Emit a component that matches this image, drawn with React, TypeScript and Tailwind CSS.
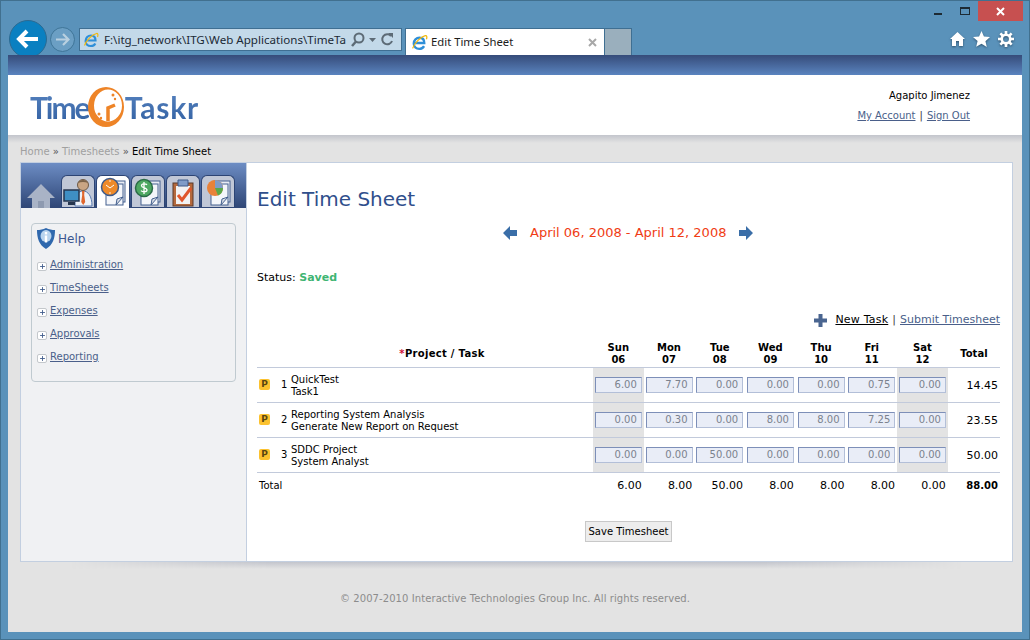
import { Plus } from 'lucide-react';

const days = [
    ['Sun', '06'],
    ['Mon', '07'],
    ['Tue', '08'],
    ['Wed', '09'],
    ['Thu', '10'],
    ['Fri', '11'],
    ['Sat', '12'],
];

const rows = [
    { n: 1, project: 'QuickTest', task: 'Task1', hours: ['6.00', '7.70', '0.00', '0.00', '0.00', '0.75', '0.00'], total: '14.45' },
    { n: 2, project: 'Reporting System Analysis', task: 'Generate New Report on Request', hours: ['0.00', '0.30', '0.00', '8.00', '8.00', '7.25', '0.00'], total: '23.55' },
    { n: 3, project: 'SDDC Project', task: 'System Analyst', hours: ['0.00', '0.00', '50.00', '0.00', '0.00', '0.00', '0.00'], total: '50.00' },
];

const totals = ['6.00', '8.00', '50.00', '8.00', '8.00', '8.00', '0.00'];
const helpLinks = ['Administration', 'TimeSheets', 'Expenses', 'Approvals', 'Reporting'];

function IeIcon({ size = 16 }: { size?: number }) {
    return (
        <svg width={size} height={size} viewBox="0 0 16 16" className="shrink-0">
            <path d="M3 8.5h9.5C12.5 5.5 10.8 3.5 8 3.5 5 3.5 2.6 5.7 2.6 9c0 3 2.2 5 5.2 5 2 0 3.600-.9 4.500-2.600" fill="none" stroke="#2f8fd8" strokeWidth="2.200" />
            <path d="M1.500 13.500C3 9 9 2.500 13.500 1.500c1.500-.3 1.800 1.500 1 3.500" fill="none" stroke="#f2b90f" strokeWidth="1.200" />
        </svg>
    );
}

function SheetBack() {
    return (
        <>
            <rect x="12" y="5" width="16" height="21" fill="#e8ecf4" stroke="#44608f" />
            <rect x="9" y="8" width="17" height="21" fill="#f4f6fa" stroke="#44608f" />
            <path d="M26 21l-7 8M19 29l1-6 6-2" fill="#d8dde6" stroke="#44608f" />
        </>
    );
}

function NavTab({ active, children }: { active?: boolean; children: React.ReactNode }) {
    return (
        <div
            className={
                active
                    ? 'flex h-[33px] w-[34px] items-end justify-center rounded-t-[6px] border border-b-0 border-[#2c4474] bg-white'
                    : 'flex h-[32px] w-[34px] items-end justify-center rounded-t-[6px] border border-b-0 border-[#2c4474] bg-[#c0c7d6]'
            }
        >
            {children}
        </div>
    );
}

function Sidebar() {
    return (
        <div className="w-[226px] shrink-0 border-r border-[#c3cfe0] bg-[#f0f1f3]">
            <div className="flex h-[45px] items-end bg-gradient-to-b from-[#6d8dc4] to-[#2f4676] pl-[6px]">
                <svg width="28" height="24" viewBox="0 0 28 24" className="mr-[6px]">
                    <path d="M14 0L28 14H23V24H5V14H0z" fill="#a9b3c6" />
                    <rect x="11" y="17" width="6" height="7" fill="#8e9ab0" />
                </svg>
                <div className="flex gap-px">
                    <NavTab>
                        <svg width="32" height="31" viewBox="0 0 32 31">
                            <path d="M13 30c0-10 3-15 8-15s9 5 9 15z" fill="#eef2f8" stroke="#5a7bb0" />
                            <circle cx="21" cy="9" r="5.500" fill="#c9a583" stroke="#6d5a48" />
                            <path d="M16 7c1-4 9-4 10 0-3-1.500-7-1.500-10 0z" fill="#7a6248" />
                            <path d="M20 15h2.500l-.3 4 1 7-2 3-2-3 1-7z" fill="#e0662c" />
                            <rect x="2" y="14" width="15" height="11" fill="#3f8fc4" stroke="#26364f" strokeWidth="1.500" />
                            <rect x="6" y="26" width="7" height="3" fill="#26364f" />
                        </svg>
                    </NavTab>
                    <NavTab active>
                        <svg width="32" height="32" viewBox="0 0 32 32">
                            <SheetBack />
                            <circle cx="13" cy="11" r="8.500" fill="#ee8a2a" stroke="#3d5a8a" strokeWidth="1.500" />
                            <path d="M9 9l4 3 4-3" fill="none" stroke="#fff" />
                            <circle cx="13" cy="5" r=".800" fill="#fff" />
                            <circle cx="13" cy="17" r=".800" fill="#fff" />
                        </svg>
                    </NavTab>
                    <NavTab>
                        <svg width="32" height="31" viewBox="0 0 32 31">
                            <SheetBack />
                            <circle cx="12" cy="12" r="8.500" fill="#4ea862" stroke="#2b6b48" strokeWidth="1.500" />
                            <path d="M15 9c-1-1.500-5.500-1.500-5.500.8 0 2.700 5.500 1.400 5.500 4.200 0 2.200-4.500 2.200-6 .6M12 6v12" fill="none" stroke="#fff" strokeWidth="1.300" />
                        </svg>
                    </NavTab>
                    <NavTab>
                        <svg width="30" height="30" viewBox="0 0 30 30">
                            <rect x="5" y="6" width="20" height="23" fill="#b5693c" stroke="#5a3a2a" />
                            <rect x="8" y="9" width="14" height="18" fill="#f2f2f2" />
                            <path d="M10 3h10v6H10z" fill="#7f9cc8" stroke="#3d5a8a" />
                            <path d="M10 18l4 5 9-12" fill="none" stroke="#e0562c" strokeWidth="3" />
                        </svg>
                    </NavTab>
                    <NavTab>
                        <svg width="32" height="31" viewBox="0 0 32 31">
                            <SheetBack />
                            <circle cx="13" cy="12" r="8" fill="#e8823a" />
                            <path d="M13 12V4a8 8 0 0 1 8 8z" fill="#7f9cc8" />
                            <path d="M13 12h8a8 8 0 0 1-5 7.400z" fill="#5aa84a" />
                        </svg>
                    </NavTab>
                </div>
            </div>
            <div className="px-[10px] pt-[15px]">
                <div className="h-[159px] rounded-[4px] border border-[#c0cad0] px-[5px] pt-[4px]">
                    <div className="flex items-center gap-[3px] text-[12px] text-[#3b5590]">
                        <svg width="18" height="21" viewBox="0 0 18 21">
                            <path d="M9 0c3 1.500 6 2 9 2 0 8-2 15-9 19C2 17 0 10 0 2c3 0 6-.5 9-2z" fill="#2f68ad" />
                            <ellipse cx="9" cy="8" rx="5.500" ry="6" fill="#b9d4ee" />
                            <rect x="7.800" y="4" width="2.400" height="2.400" fill="#fff" />
                            <rect x="7.800" y="7.500" width="2.400" height="7" fill="#fff" />
                        </svg>
                        Help
                    </div>
                    <div className="mt-[9px] flex flex-col gap-[9px]">
                        {helpLinks.map((link) => (
                            <div key={link} className="flex h-[14px] items-center gap-[3px]">
                                <span className="mt-[2px] flex h-[9px] w-[10px] items-center justify-center rounded-[2px] border border-[#c4c8cc] bg-white">
                                    <Plus size={7} strokeWidth={3} className="text-[#3f5a8a]" />
                                </span>
                                <a className="text-[10px] leading-none text-[#4a5f8a] underline">{link}</a>
                            </div>
                        ))}
                    </div>
                </div>
            </div>
        </div>
    );
}

function TimeTable() {
    return (
        <table className="w-[743px] table-fixed border-collapse text-[10px] text-black">
            <colgroup>
                <col className="w-[336px]" />
                {days.map((d) => (
                    <col key={d[0]} className="w-[50.700px]" />
                ))}
                <col />
            </colgroup>
            <thead>
                <tr className="h-[27px] border-b border-[#c2cadb] font-bold leading-[12px]">
                    <th className="pl-[34px] pt-[2px] text-center font-bold tracking-[0.3px]">
                        <span className="text-[#d0103a]">*</span>Project / Task
                    </th>
                    {days.map((d) => (
                        <th key={d[0]} className="pb-px text-center align-bottom font-bold">
                            {d[0]}
                            <br />
                            {d[1]}
                        </th>
                    ))}
                    <th className="pt-[2px] text-center font-bold">Total</th>
                </tr>
            </thead>
            <tbody>
                {rows.map((row) => (
                    <tr key={row.n} className="h-[35px] border-b border-[#c2cadb]">
                        <td>
                            <div className="flex items-center pl-[2px]">
                                <span className="flex h-[11px] w-[11px] items-center justify-center rounded-[2px] bg-[#fcc22f] text-[9px] font-bold text-[#5a4510]">P</span>
                                <span className="ml-[11px] w-[10px] text-[10px]">{row.n}</span>
                                <span className="pt-[2px] leading-[12px]">
                                    {row.project}
                                    <br />
                                    {row.task}
                                </span>
                            </div>
                        </td>
                        {row.hours.map((h, i) => (
                            <td key={i} className={i === 0 || i === 6 ? 'bg-[#e3e3e3] text-center' : 'text-center'}>
                                <input
                                    readOnly
                                    value={h}
                                    className="h-[16px] w-[47px] border border-[#b3bfd8] border-l-[#7d8fb8] border-t-[#7d8fb8] bg-[#e9edf7] pr-[4px] text-right text-[10px] text-[#7b828e] outline-none"
                                />
                            </td>
                        ))}
                        <td className="pr-[2px] pt-[3px] text-right text-[11px]">{row.total}</td>
                    </tr>
                ))}
                <tr className="h-[25px]">
                    <td className="pl-[2px] pt-[2px]">Total</td>
                    {totals.map((t, i) => (
                        <td key={i} className="pr-[2px] pt-[2px] text-right text-[11px]">{t}</td>
                    ))}
                    <td className="pr-[2px] pt-[2px] text-right font-bold text-[10px]">88.00</td>
                </tr>
            </tbody>
        </table>
    );
}

export default function App() {
    return (
        <div className="flex h-[640px] w-[1030px] flex-col overflow-hidden bg-[#5a92ba] font-['DejaVu_Sans',sans-serif] border border-[#41708f]">
            {/* Browser chrome */}
            <div className="flex h-[54px] shrink-0 overflow-hidden pl-[8px] pr-[6px]">
                <div className="flex items-start pt-[19px]">
                    <div className="flex h-[38px] w-[38px] items-center justify-center rounded-full border border-[#2b6a92] bg-[#0a80c1]">
                        <svg width="24" height="20" viewBox="0 0 24 20">
                            <path d="M11 2L3 10l8 8M3 10h19" fill="none" stroke="#fff" strokeWidth="4" />
                        </svg>
                    </div>
                    <div className="ml-[3px] mt-[7px] flex h-[25px] w-[25px] items-center justify-center rounded-full border border-[#3f7598] bg-[#6b9fc4]">
                        <svg width="15" height="13" viewBox="0 0 15 13">
                            <path d="M8 1l5.500 5.500L8 12M13 6.500H1" fill="none" stroke="#b9d0e0" strokeWidth="2.200" />
                        </svg>
                    </div>
                    <div className="ml-[4px] mt-[8px] flex h-[23px] w-[323px] items-center border border-[#3f6f92] bg-[#c3d9e9] font-['Noto_Sans',sans-serif] text-[11.600px] text-[#1c2a36]">
                        <span className="ml-[3px]">
                            <IeIcon size={16} />
                        </span>
                        <span className="ml-[5px] w-[246px] whitespace-nowrap">F:\itg_network\ITG\Web Applications\TimeTa</span>
                        <svg width="46" height="16" viewBox="0 0 46 16">
                            <circle cx="9" cy="6" r="4.500" fill="none" stroke="#5d6b76" strokeWidth="2" />
                            <path d="M6 9.500L2 14" stroke="#5d6b76" strokeWidth="2.500" />
                            <path d="M19 6h7l-3.500 4z" fill="#5d6b76" />
                            <path d="M41 4a5 5 0 1 0 1 5" fill="none" stroke="#5d6b76" strokeWidth="2" />
                            <path d="M38 1l5 0 0 5z" fill="#5d6b76" />
                        </svg>
                    </div>
                    <div className="ml-[3px] mt-[8px] flex h-[27px] w-[200px] items-center border border-b-0 border-[#3f6f92] bg-white pl-[5px] font-['Noto_Sans',sans-serif] text-[11.300px] text-[#1c1c1c]">
                        <IeIcon size={17} />
                        <span className="ml-[3px] flex-1">Edit Time Sheet</span>
                        <svg width="9" height="9" viewBox="0 0 9 9" className="mr-[7px]">
                            <path d="M1 1l7 7M8 1L1 8" stroke="#a8a8a8" strokeWidth="2" />
                        </svg>
                    </div>
                    <div className="mt-[8px] h-[27px] w-[27px] border-r border-t border-[#3f6f92] bg-[#9aafbd]" />
                </div>
                <div className="ml-auto flex flex-col items-end">
                    <div className="flex items-start">
                        <svg width="8" height="2" viewBox="0 0 8 2" className="mr-[18px] mt-[12px]">
                            <rect width="8" height="2" fill="#1d2a33" />
                        </svg>
                        <svg width="10" height="8" viewBox="0 0 10 8" className="mr-[8px] mt-[6px]">
                            <rect x=".500" y=".500" width="9" height="7" fill="none" stroke="#1d2a33" />
                            <rect width="10" height="2" fill="#1d2a33" />
                        </svg>
                        <div className="flex h-[20px] w-[45px] items-center justify-center bg-[#c75050]">
                            <svg width="9" height="9" viewBox="0 0 9 9">
                                <path d="M1 1l7 7M8 1L1 8" stroke="#fff" strokeWidth="2" />
                            </svg>
                        </div>
                    </div>
                    <div className="mr-[9px] mt-[10px] flex items-center gap-[8px] drop-shadow-[0_1px_1px_rgba(20,40,60,0.6)]">
                        <svg width="15" height="14" viewBox="0 0 15 14">
                            <path d="M7.500 0L15 7h-2v7H9V9H6v5H2V7H0z" fill="#fff" />
                        </svg>
                        <svg width="17" height="16" viewBox="0 0 16 15">
                            <path d="M8 0l2.300 5.200 5.700.5-4.300 3.800 1.300 5.500L8 12l-5 2.900 1.300-5.500L0 5.700l5.700-.5z" fill="#fff" />
                        </svg>
                        <svg width="16" height="16" viewBox="0 0 15 15">
                            <circle cx="7.500" cy="7.500" r="4" fill="none" stroke="#fff" strokeWidth="2.500" />
                            <path d="M7.500 0v3M7.500 12v3M0 7.500h3M12 7.500h3M2.200 2.200l2 2M10.800 10.800l2 2M12.800 2.200l-2 2M4.200 10.800l-2 2" stroke="#fff" strokeWidth="2.500" />
                        </svg>
                    </div>
                </div>
            </div>

            {/* Page */}
            <div className="mx-[7px] flex h-[577px] flex-col bg-[#e3e3e3]">
                <div className="h-[20px] shrink-0 bg-gradient-to-b from-[#364c7a] to-[#5a84bf]" />
                <div className="flex h-[60px] shrink-0 items-start justify-between bg-white pl-[22px] pr-[52px]">
                    <div className="mt-[11px] flex items-center">
                        <span className="bg-gradient-to-b from-[#5a86c2] to-[#2f5ea0] bg-clip-text font-['Lato',sans-serif] text-[30px] font-bold leading-[40px] tracking-[-2px] text-transparent">Time</span>
                        <svg width="36" height="42" viewBox="0 0 36 42" className="ml-[-1px] mr-[1px]">
                            <path
                                fillRule="evenodd"
                                d="M18 1a18 20 0 1 0 0 40 18 20 0 0 0 0-40zM20 3.500a14 16 0 1 1 0 32 14 16 0 0 1 0-32z"
                                fill="#ee8427"
                            />
                            <path d="M20 35V22l7-3" fill="none" stroke="#ee8427" strokeWidth="3.500" />
                            <circle cx="25" cy="9" r="1.500" fill="#ee8427" />
                            <circle cx="27" cy="13" r="1.200" fill="#ee8427" />
                            <circle cx="11" cy="28" r="1.500" fill="#ee8427" />
                            <circle cx="13" cy="32" r="1.200" fill="#ee8427" />
                        </svg>
                        <span className="bg-gradient-to-b from-[#5a86c2] to-[#2f5ea0] bg-clip-text font-['Lato',sans-serif] text-[30px] font-bold leading-[40px] tracking-[0.800px] text-transparent">Taskr</span>
                    </div>
                    <div className="pt-[14px] text-right text-[10px] leading-[13px]">
                        <div className="text-black">Agapito Jimenez</div>
                        <div className="mt-[7px] text-[#4a5f8a]">
                            <a className="underline">My Account</a>
                            <span className="mx-[4px] text-[#333]">|</span>
                            <a className="underline">Sign Out</a>
                        </div>
                    </div>
                </div>
                <div className="h-[8px] shrink-0 bg-gradient-to-b from-[#c3c5cc] to-[#e3e3e3]" />

                <div className="pl-[12px] pt-[1px] text-[10px] leading-[16px] text-[#a0a0a0]">
                    Home <span className="text-[#555]">»</span> Timesheets <span className="text-[#555]">»</span> <span className="text-black">Edit Time Sheet</span>
                </div>

                <div className="ml-[12px] mt-[2px] flex h-[400px] w-[993px] border border-[#c3cfe0] bg-white">
                    <Sidebar />
                    <div className="flex-1 pl-[10px]">
                        <h1 className="mt-[24px] text-[20px] leading-[24px] text-[#304f8c]">Edit Time Sheet</h1>
                        <div className="ml-[246px] mt-[11px] flex h-[22px] items-center text-[13px] text-[#f03c14]">
                            <svg width="14" height="14" viewBox="0 0 14 14">
                                <path d="M7 0v4h7v6H7v4L0 7z" fill="#3a6ea8" />
                            </svg>
                            <span className="mx-[13px]">April 06, 2008 - April 12, 2008</span>
                            <svg width="14" height="14" viewBox="0 0 14 14">
                                <path d="M7 0v4H0v6h7v4l7-7z" fill="#3a6ea8" />
                            </svg>
                        </div>
                        <div className="mt-[27px] text-[11px] leading-[14px] text-black">
                            Status: <span className="font-bold text-[#3fb573]">Saved</span>
                        </div>
                        <div className="mr-[12px] mt-[28px] flex items-center justify-end text-[11px] leading-[14px]">
                            <svg width="13" height="13" viewBox="0 0 13 13" className="mr-[8px]">
                                <path d="M4.500 0h4v4.500H13v4H8.500V13h-4V8.500H0v-4h4.500z" fill="#4a6590" />
                            </svg>
                            <a className="tracking-[0.2px] text-black underline">New Task</a>
                            <span className="mx-[4px] text-[#444]">|</span>
                            <a className="text-[#4a5f8a] underline">Submit Timesheet</a>
                        </div>
                        <div className="mt-[13px]">
                            <TimeTable />
                        </div>
                        <div className="ml-[328px] mt-[21px]">
                            <button className="h-[21px] w-[87px] border border-[#c8c8c8] bg-[#ededed] text-[10px] text-black">Save Timesheet</button>
                        </div>
                    </div>
                </div>
                <div className="ml-[12px] h-[7px] w-[993px] shrink-0 bg-gradient-to-b from-[#c3c5cc] to-[#e3e3e3] [mask-image:linear-gradient(to_right,transparent_5%,black_25%,black_75%,transparent_95%)]" />
                <div className="mt-[22px] text-center text-[10px] tracking-[0.08px] text-[#8c8c8c]">© 2007-2010 Interactive Technologies Group Inc. All rights reserved.</div>
            </div>
        </div>
    );
}
